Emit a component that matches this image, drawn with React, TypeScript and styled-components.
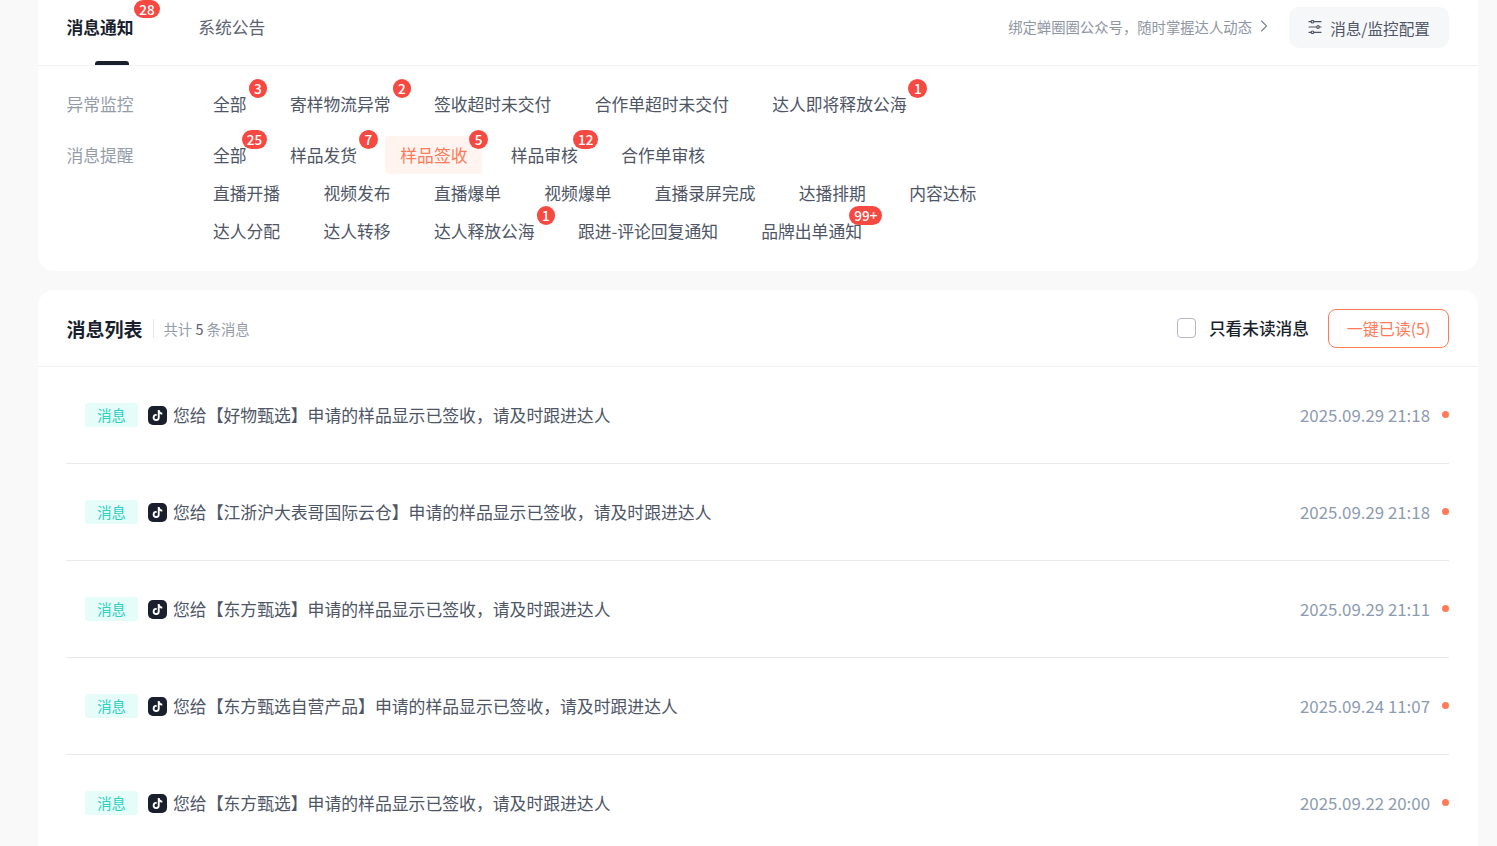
import React from 'react';
import styled, { createGlobalStyle } from 'styled-components';
import { ChevronRight } from 'lucide-react';
import { FaTiktok } from 'react-icons/fa6';

const Global = createGlobalStyle`
  html, body { margin: 0; padding: 0; height: 846px; overflow: hidden; background: #f9f9fa; }
  * { box-sizing: border-box; }
  body { font-family: "Noto Sans CJK SC", "Noto Sans", sans-serif; }
`;

const Page = styled.div`
  width: 1497px;
  height: 846px;
  overflow: hidden;
  padding: 0 19px 0 38px;
  display: flex;
  flex-direction: column;
  gap: 19px;
`;
const TopCard = styled.section`
  background: #fff;
  border-radius: 0 0 16px 16px;
`;
const ListCard = styled.section`
  background: #fff;
  border-radius: 16px 16px 0 0;
  flex: 1;
`;
const TabBar = styled.div`
  height: 66px;
  padding: 0 29px 11px 28.5px;
  border-bottom: 1px solid #f1f2f4;
  display: flex;
  align-items: center;
  justify-content: space-between;
`;
const Tabs = styled.div`
  display: flex;
  gap: 64.5px;
`;
const Tab = styled.div<{ $active?: boolean }>`
  position: relative;
  font-size: 16.8px;
  line-height: 24px;
  font-weight: ${p => (p.$active ? 700 : 400)};
  color: ${p => (p.$active ? '#1a1f2e' : '#5c6370')};
`;
const TabMark = styled.i`
  position: absolute;
  left: 28.5px;
  top: 46px;
  width: 34px;
  height: 4px;
  border-radius: 3px 3px 0 0;
  background: #1a1f2e;
`;
const Badge = styled.span<{ $top?: number; $right?: number }>`
  position: absolute;
  top: ${p => p.$top ?? -6}px;
  right: ${p => p.$right ?? -5.5}px;
  min-width: 18.5px;
  height: 18.5px;
  padding: 0 5px;
  border-radius: 10px;
  background: #f64941;
  color: #fff;
  font-size: 13.5px;
  font-weight: 500;
  line-height: 18.5px;
  text-align: center;
`;
const HeaderRight = styled.div`
  display: flex;
  align-items: center;
`;
const BindLink = styled.div`
  display: flex;
  align-items: center;
  font-size: 14.35px;
  line-height: 20px;
  color: #8f96a3;
  svg { margin: -2px 0 0 2px; color: #7d8491; }
`;
const ConfigButton = styled.div`
  width: 160px;
  height: 41px;
  margin-left: 15px;
  padding-top: 2px;
  border-radius: 10px;
  background: #f6f7f9;
  color: #4e5565;
  font-size: 15.6px;
  display: flex;
  align-items: center;
  justify-content: center;
  gap: 8px;
  svg { margin-bottom: 2px; }
`;
const Filters = styled.div`
  padding: 19px 29px 21px 28.5px;
  display: flex;
  flex-direction: column;
  gap: 13px;
`;
const FilterGroup = styled.div`
  display: flex;
`;
const GroupLabel = styled.div`
  width: 131.5px;
  font-size: 16.8px;
  line-height: 38px;
  color: #959ca9;
`;
const Lines = styled.div`
  display: flex;
  flex-direction: column;
`;
const Line = styled.div`
  display: flex;
  gap: 13.3px;
`;
const Item = styled.div<{ $active?: boolean }>`
  position: relative;
  height: 38px;
  padding: 0 15px;
  border-radius: 3px;
  font-size: 16.8px;
  line-height: 38px;
  white-space: nowrap;
  color: ${p => (p.$active ? '#ff7a59' : '#4e5565')};
  background: ${p => (p.$active ? '#fff4ef' : 'transparent')};
`;
const ListHeader = styled.div`
  height: 77px;
  padding: 0 29px 0 28.5px;
  border-bottom: 1px solid #f1f2f4;
  display: flex;
  align-items: center;
  justify-content: space-between;
`;
const TitleGroup = styled.div`
  display: flex;
  align-items: center;
`;
const Title = styled.div`
  font-size: 19px;
  font-weight: 700;
  color: #1a1f2e;
  padding-right: 10px;
`;
const Divider = styled.i`
  width: 1px;
  height: 19px;
  background: #e5e7eb;
  margin-right: 10px;
`;
const Count = styled.div`
  font-size: 14.35px;
  color: #959ca9;
  b { font-weight: 400; color: #5c6370; }
`;
const Controls = styled.div`
  display: flex;
  align-items: center;
`;
const Check = styled.span`
  width: 19px;
  height: 20px;
  border: 1px solid #b5b8c6;
  border-radius: 4px;
  margin-right: 13px;
`;
const CheckLabel = styled.span`
  font-size: 16.7px;
  font-weight: 500;
  color: #1a1f2e;
  margin-right: 19px;
`;
const ReadAll = styled.div`
  width: 121px;
  height: 39px;
  border: 1px solid #ff7a59;
  border-radius: 8px;
  color: #ff7a59;
  font-size: 16px;
  display: flex;
  align-items: center;
  justify-content: center;
`;
const Rows = styled.div`
  padding: 0 29px 0 28px;
`;
const Row = styled.div`
  height: 97px;
  padding-left: 19px;
  border-bottom: 1px solid #e9eaec;
  display: flex;
  align-items: center;
`;
const Tag = styled.span`
  width: 53px;
  height: 24px;
  border-radius: 3px;
  background: #e6fcf9;
  color: #2ccfc0;
  font-size: 14.35px;
  line-height: 24px;
  text-align: center;
  margin-right: 10px;
`;
const TikTok = styled.span`
  width: 19px;
  height: 19px;
  border-radius: 5px;
  background: #1a1f2e;
  color: #fff;
  display: flex;
  align-items: center;
  justify-content: center;
  margin-right: 6px;
`;
const Text = styled.div`
  flex: 1;
  font-size: 16.83px;
  line-height: 24px;
  color: #4e5565;
`;
const Time = styled.div`
  font-size: 16.85px;
  line-height: 24px;
  color: #8c9bb0;
  margin-right: 12px;
`;
const Dot = styled.i`
  width: 7px;
  height: 7px;
  border-radius: 50%;
  background: #ff7a59;
  margin-top: -2px;
`;

type F = { t: string; b?: string; active?: boolean };
const groups: { label: string; lines: F[][] }[] = [
  {
    label: '异常监控',
    lines: [[
      { t: '全部', b: '3' },
      { t: '寄样物流异常', b: '2' },
      { t: '签收超时未交付' },
      { t: '合作单超时未交付' },
      { t: '达人即将释放公海', b: '1' },
    ]],
  },
  {
    label: '消息提醒',
    lines: [
      [
        { t: '全部', b: '25' },
        { t: '样品发货', b: '7' },
        { t: '样品签收', b: '5', active: true },
        { t: '样品审核', b: '12' },
        { t: '合作单审核' },
      ],
      [
        { t: '直播开播' },
        { t: '视频发布' },
        { t: '直播爆单' },
        { t: '视频爆单' },
        { t: '直播录屏完成' },
        { t: '达播排期' },
        { t: '内容达标' },
      ],
      [
        { t: '达人分配' },
        { t: '达人转移' },
        { t: '达人释放公海', b: '1' },
        { t: '跟进-评论回复通知' },
        { t: '品牌出单通知', b: '99+' },
      ],
    ],
  },
];

const messages = [
  ['您给【好物甄选】申请的样品显示已签收，请及时跟进达人', '2025.09.29 21:18'],
  ['您给【江浙沪大表哥国际云仓】申请的样品显示已签收，请及时跟进达人', '2025.09.29 21:18'],
  ['您给【东方甄选】申请的样品显示已签收，请及时跟进达人', '2025.09.29 21:11'],
  ['您给【东方甄选自营产品】申请的样品显示已签收，请及时跟进达人', '2025.09.24 11:07'],
  ['您给【东方甄选】申请的样品显示已签收，请及时跟进达人', '2025.09.22 20:00'],
];

const SlidersIcon = () => (
  <svg width="14" height="14" viewBox="0 0 14 14" fill="none" stroke="currentColor" strokeWidth="1.2" strokeLinecap="round">
    <path d="M1 1.7H13M1 7H13M1 12.3H13" />
    <circle cx="4.5" cy="1.7" r="1.3" fill="#f6f7f9" />
    <circle cx="10" cy="7" r="1.3" fill="#f6f7f9" />
    <circle cx="4.5" cy="12.3" r="1.3" fill="#f6f7f9" />
  </svg>
);

export default function App() {
  return (
    <Page>
      <Global />
      <TopCard>
        <TabBar>
          <Tabs>
            <Tab $active>
              消息通知
              <Badge $top={-15.5} $right={-26}>28</Badge>
              <TabMark />
            </Tab>
            <Tab>系统公告</Tab>
          </Tabs>
          <HeaderRight>
            <BindLink>
              绑定蝉圈圈公众号，随时掌握达人动态
              <ChevronRight size={20} strokeWidth={1.3} />
            </BindLink>
            <ConfigButton>
              <SlidersIcon />
              消息/监控配置
            </ConfigButton>
          </HeaderRight>
        </TabBar>
        <Filters>
          {groups.map(g => (
            <FilterGroup key={g.label}>
              <GroupLabel>{g.label}</GroupLabel>
              <Lines>
                {g.lines.map((line, i) => (
                  <Line key={i}>
                    {line.map(f => (
                      <Item key={f.t} $active={f.active}>
                        {f.t}
                        {f.b && <Badge>{f.b}</Badge>}
                      </Item>
                    ))}
                  </Line>
                ))}
              </Lines>
            </FilterGroup>
          ))}
        </Filters>
      </TopCard>
      <ListCard>
        <ListHeader>
          <TitleGroup>
            <Title>消息列表</Title>
            <Divider />
            <Count>共计 <b>5</b> 条消息</Count>
          </TitleGroup>
          <Controls>
            <Check />
            <CheckLabel>只看未读消息</CheckLabel>
            <ReadAll>一键已读(5)</ReadAll>
          </Controls>
        </ListHeader>
        <Rows>
          {messages.map((m, i) => (
            <Row key={i}>
              <Tag>消息</Tag>
              <TikTok><FaTiktok size={11} /></TikTok>
              <Text>{m[0]}</Text>
              <Time>{m[1]}</Time>
              <Dot />
            </Row>
          ))}
        </Rows>
      </ListCard>
    </Page>
  );
}
